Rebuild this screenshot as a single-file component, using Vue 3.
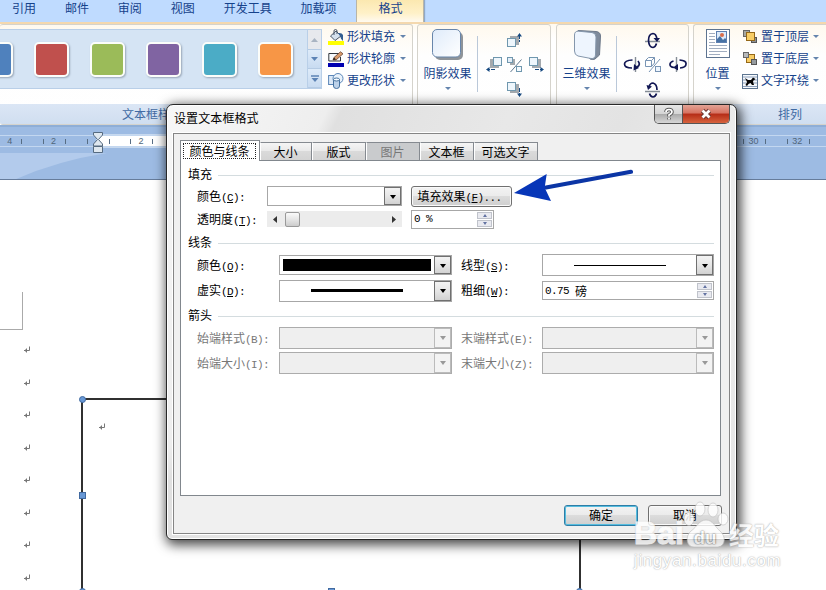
<script setup>
const menus = ['引用', '邮件', '审阅', '视图', '开发工具', '加载项']
const swatches = ['#4f81bd', '#c0504d', '#9bbb59', '#8064a2', '#4bacc6', '#f79646']
const tabs = [
  { text: '颜色与线条', w: 80, state: 'active' },
  { text: '大小', w: 52 },
  { text: '版式', w: 54 },
  { text: '图片', w: 54, state: 'disabled' },
  { text: '文本框', w: 54 },
  { text: '可选文字', w: 64 }
]
const nudges = [
  { x: 23, y: 8, sx: 3, sy: -2 },
  { x: 9, y: 27, sx: -3, sy: 2 },
  { x: 45, y: 27, sx: 3, sy: 2 },
  { x: 23, y: 52, sx: 3, sy: 2 }
]
const rulerMarks = Array.from({ length: 19 }, (_, i) => (i === 2 ? '' : Math.abs(i - 2) * 2))
const arrowRows = [
  { left: '始端样式', lk: 'B', right: '末端样式', rk: 'E' },
  { left: '始端大小', lk: 'I', right: '末端大小', rk: 'Z' }
]
</script>

<template>
  <div class="word">
    <nav class="menu">
      <span v-for="m in menus" :key="m" class="menu-item">{{ m }}</span>
      <span class="menu-item current">格式</span>
    </nav>

    <div class="ribbon">
      <section class="group g-style">
        <div class="group-body">
          <div class="gallery">
            <div class="swatches">
              <i v-for="c in swatches" :key="c" class="swatch" :style="{ background: c }"></i>
            </div>
            <div class="gallery-scroll">
              <span class="off"><svg width="7" height="4"><path d="M0 4L3.5 0L7 4z" fill="#a9b4c2" /></svg></span>
              <span><svg width="7" height="4"><path d="M0 0L3.5 4L7 0z" fill="#5c83b5" /></svg></span>
              <span><svg width="8" height="7"><path d="M0 1H8" stroke="#5c83b5" stroke-width="1.4" /><path d="M.5 3L4 7L7.500 3z" fill="#5c83b5" /></svg></span>
            </div>
          </div>
          <div class="commands">
            <div class="command">
              <svg width="16" height="16" viewBox="0 0 16 16">
                <rect y="12" width="16" height="4" fill="#ffff00" />
                <path d="M2.500 7L8 2L13 7L7 11.500z" fill="#d6e2ee" stroke="#4a5666" />
                <path d="M6 6V2Q6 .5 7.500 .5T9 2V5" fill="none" stroke="#4a5666" />
                <path d="M10 4Q14 3.500 15 6V12Q13 11 12 7z" fill="#355f91" />
              </svg>
              <span>形状填充</span><i class="caret"></i>
            </div>
            <div class="command">
              <svg width="16" height="16" viewBox="0 0 16 16">
                <rect y="12" width="16" height="4" fill="#0000b0" />
                <path d="M11 2.500H.8V10H12.500V6" fill="#f7fafd" stroke="#34393f" />
                <path d="M5 9L6 6.500L12.500 .8L15 2.800L8 9z" fill="#d99b6b" stroke="#694431" stroke-width=".8" />
                <path d="M5 9L6 6.500L8 8.500z" fill="#222" />
              </svg>
              <span>形状轮廓</span><i class="caret"></i>
            </div>
            <div class="command">
              <svg width="16" height="16" viewBox="0 0 16 16">
                <rect x=".6" y="2.500" width="9" height="9" fill="#dce9f7" stroke="#5b86b8" />
                <circle cx="10" cy="5.500" r="5" fill="#e9f2fb" stroke="#5b86b8" />
                <path d="M5.500 6.500V13Q5.500 15.500 8.500 15.500T11.500 13V6.500z" fill="#bcd2ea" stroke="#44719f" />
                <ellipse cx="8.500" cy="6.500" rx="3" ry="1.500" fill="#f4f9fe" stroke="#44719f" />
              </svg>
              <span>更改形状</span><i class="caret"></i>
            </div>
          </div>
        </div>
        <div class="group-title first">文本框样式</div>
      </section>

      <section class="group g-effect">
        <div class="group-body">
          <div class="big">
            <svg width="34" height="34" viewBox="0 0 34 34">
              <defs><linearGradient id="tile" x2="1" y2="1"><stop stop-color="#dfebfa" /><stop offset="1" stop-color="#fff" /></linearGradient></defs>
              <rect x="4" y="4" width="28" height="28" rx="5" fill="#8f9499" />
              <rect x="1.500" y="1.500" width="28" height="27.500" rx="4.500" fill="url(#tile)" stroke="#6886ab" />
            </svg>
            <span>阴影效果</span><i class="caret"></i>
          </div>
          <svg class="pad" width="64" height="68" viewBox="0 0 64 68" fill="none">
            <g v-for="n in nudges" :key="n.x + '-' + n.y">
              <rect :x="n.x + n.sx" :y="n.y + n.sy" width="9" height="9" fill="#a4a9ae" />
              <rect :x="n.x + .5" :y="n.y + .5" width="8" height="8" fill="#eef6fc" stroke="#6f97ae" />
            </g>
            <rect x="26" y="29" width="5" height="6" fill="#a4a9ae" />
            <rect x="23.500" y="27.500" width="5" height="5" fill="#e4eef8" stroke="#6f97ae" />
            <rect x="32.500" y="36.500" width="5" height="5" fill="#f5faff" stroke="#6f97ae" />
            <path d="M37.500 29.500L26.500 42" stroke="#5f7890" />
            <path d="M35.500 5V12M11 39.500H4M51 39.500H58M35.500 58V65" stroke="#164980" stroke-dasharray="4 1" />
            <path d="M33 6.500L35.500 3L38 6.500zM5.500 37L2 39.500L5.500 42zM56.500 37L60 39.500L56.500 42zM33 63.500L35.500 67L38 63.500z" fill="#164980" />
          </svg>
        </div>
        <div class="group-title"></div>
      </section>

      <section class="group g-effect g-3d">
        <div class="group-body">
          <div class="big">
            <svg width="34" height="34" viewBox="0 0 34 34">
              <path d="M8 2.500L26 3.500Q30.500 4 30.500 8L29.500 27L25 31Q23 32 20 31L12 20z" fill="#7f8b9c" stroke="#6e7a8b" />
              <path d="M4.500 7Q4.500 3 8.500 3.200L22 4.500Q26 5 26 9L25.500 27Q25 31 21 30.500L8 28Q4.500 27 4.500 23z" fill="#eef5fe" stroke="#8597ac" />
            </svg>
            <span>三维效果</span><i class="caret"></i>
          </div>
          <svg class="pad" width="64" height="68" viewBox="0 0 64 68" fill="none">
            <g stroke="#858d96" stroke-width="1.400"><path d="M22 11.500H37M22 61.500H37M12.500 27V42M53.500 27V42" /></g>
            <g stroke="#111653" stroke-width="1.700">
              <path d="M34 9Q33 3.500 30 3.500Q25.500 4 25.500 10.500Q26 17.500 30 17.500Q32.500 17 33.500 13.500" />
              <path d="M26 57Q27 53 30 53Q34 54 34 60M26.500 63.500Q27.500 67 30 67Q32.500 67 33.500 63.500" />
              <path d="M9.500 30Q1.500 30.500 1.500 34Q1.500 38 9 38M15 31Q18 35 14 37" />
              <path d="M56.500 30Q63.500 30.500 63 34Q63 37.500 57 38M50.500 31Q47 32 47 34.500Q47 37 51 37.500" />
            </g>
            <path d="M30.500 8H37L34 12zM23.500 55L29 56.500L25 60zM11 34L16 38L10.500 40.500zM55 34L50 37.500L55 40.500z" fill="#111653" />
            <path d="M22.500 30.500L25.500 27.500H31.500V33L28.500 36.500H22.500zM22.500 30.500H28.500V36.500M28.500 30.500L31.500 27.500M37 29L26 42" stroke="#7894b4" />
            <rect x="32.500" y="36.500" width="5" height="5" fill="#eef6ff" stroke="#7894b4" />
          </svg>
        </div>
        <div class="group-title"></div>
      </section>

      <section class="group g-arrange">
        <div class="group-body">
          <div class="big">
            <svg width="26" height="34" viewBox="0 0 26 34">
              <rect x="1.500" y="1.500" width="23" height="28" fill="#fff" stroke="#5e7490" />
              <path d="M4 5.500H10M4 8.500H10M4 11.500H10M4 14.500H10M4 17.500H22M4 20.500H22M4 23.500H22M4 26.500H15" stroke="#a1adc0" />
              <rect x="11.500" y="3.500" width="10" height="11" fill="#dceafa" stroke="#5d7fb0" />
              <path d="M12 14V11L15 8L18 12L20 10L21 11V14z" fill="#4772a5" /><circle cx="17" cy="7" r="2" fill="#d86d4b" />
            </svg>
            <span>位置</span><i class="caret"></i>
          </div>
          <div class="commands">
            <div class="command">
              <svg width="16" height="16" viewBox="0 0 16 16"><rect x="1.500" y="1.500" width="6" height="6" fill="#a7a7a0" stroke="#666" /><rect x="9.500" y="8.500" width="5" height="5" fill="#8d9297" stroke="#555" /><rect x="4.500" y="3.500" width="8" height="8" fill="#f8cd65" stroke="#946718" /></svg>
              <span>置于顶层</span><i class="caret"></i>
            </div>
            <div class="command">
              <svg width="16" height="16" viewBox="0 0 16 16"><rect x="4.500" y="3.500" width="8" height="8" fill="#f8cd65" stroke="#946718" /><rect x="1.500" y="1.500" width="5" height="5" fill="#b7b9b9" stroke="#666" /><rect x="9.500" y="8.500" width="5" height="5" fill="#959b9f" stroke="#555" /></svg>
              <span>置于底层</span><i class="caret"></i>
            </div>
            <div class="command">
              <svg width="16" height="16" viewBox="0 0 16 16"><rect x=".5" y="1.500" width="15" height="14" fill="#f6f9fd" stroke="#5c7490" /><path d="M1 4H15M1 13.500H15M1 7H4M12 7H15M1 10H4M12 10H15" stroke="#8da0bb" /><path d="M3 5L6 7H9L11 4.500L13.500 6L11 8L12 12H10L8.500 10L6.500 11L5 13L3.500 12L5 9z" fill="#050505" /></svg>
              <span>文字环绕</span><i class="caret"></i>
            </div>
          </div>
        </div>
        <div class="group-title arrange-title">排列</div>
      </section>
    </div>

    <div class="ruler-zone">
      <svg class="swoosh" width="826" height="53"><path d="M0 26H107Q56 34 14 53H0z" fill="#b3cbec" /></svg>
      <div class="ruler">
        <div class="ruler-page"></div>
        <div class="marks">
          <span v-for="(n, i) in rulerMarks" :key="i" class="mark">{{ n }}</span>
        </div>
        <svg class="indent" width="10" height="22" viewBox="0 0 10 22"><path d="M.5 .5H9.500V3L5.500 7.500L9.500 12V14H.5V12L4.500 7.500L.5 3zM.5 14.500H9.500V20.500H.5z" fill="#dfe8f0" stroke="#566b80" /></svg>
      </div>
    </div>

    <main class="page">
      <div class="margin-corner"></div>
      <div class="paragraphs">
        <svg v-for="n in 8" :key="n" width="8" height="8" viewBox="0 0 8 8"><path d="M6.500 .5V4.500H1M3.500 2.500V6.500M2.500 3.500V5.500" fill="none" stroke="#777" /></svg>
      </div>
      <div class="textbox">
        <i class="handle round tl"></i><i class="handle ml"></i><i class="handle round bl"></i><i class="handle bm"></i><i class="handle round br"></i>
        <svg class="pilcrow" width="8" height="8" viewBox="0 0 8 8"><path d="M6.500 .5V4.500H1M3.500 2.500V6.500M2.500 3.500V5.500" fill="none" stroke="#777" /></svg>
      </div>
    </main>

    <div class="dialog">
      <header class="titlebar">
        <span class="title">设置文本框格式</span>
        <div class="window-buttons">
          <span class="help"><svg width="12" height="14" viewBox="0 0 12 14"><path d="M3 5Q3 2.500 6 2.500T9 5Q9 6.500 6 8V9.500M6 10.800V12.500" fill="none" stroke="#5b5b5b" stroke-width="3.600" /><path d="M3 5Q3 2.500 6 2.500T9 5Q9 6.500 6 8V9.500M6 10.800V12.500" fill="none" stroke="#fff" stroke-width="1.700" /></svg></span>
          <span class="close"><svg width="14" height="12" viewBox="0 0 14 12"><path d="M3.500 2.500L10.500 9.500M10.500 2.500L3.500 9.500" stroke="#6b3631" stroke-width="4.600" /><path d="M3.500 2.500L10.500 9.500M10.500 2.500L3.500 9.500" stroke="#fff" stroke-width="2.800" /></svg></span>
        </div>
      </header>

      <div class="client">
        <div class="tabs">
          <div v-for="t in tabs" :key="t.text" class="tab" :class="t.state" :style="{ width: t.w + 'px' }"><span>{{ t.text }}</span></div>
        </div>
        <div class="panel">
          <div class="heading"><span>填充</span></div>
          <div class="row fill-row">
            <label>颜色<b>(<u>C</u>):</b></label>
            <div class="combo h19"><div class="value"></div><i class="drop"></i></div>
            <button class="btn effects">填充效果<b>(<u>F</u>)...</b></button>
          </div>
          <div class="row fill-row trans">
            <label>透明度<b>(<u>T</u>):</b></label>
            <div class="slider"><svg width="4" height="7"><path d="M4 0L0 3.500L4 7z" /></svg><i></i><svg width="4" height="7"><path d="M0 0L4 3.500L0 7z" /></svg></div>
            <div class="spin short"><b>0 %</b><span class="arrows"><i class="up"></i><i class="down"></i></span></div>
          </div>

          <div class="heading second"><span>线条</span></div>
          <div class="row pair">
            <label>颜色<b>(<u>O</u>):</b></label>
            <div class="combo h19"><div class="value black"></div><i class="drop"></i></div>
            <label>线型<b>(<u>S</u>):</b></label>
            <div class="combo"><div class="value"><i class="thin"></i></div><i class="drop"></i></div>
          </div>
          <div class="row pair">
            <label>虚实<b>(<u>D</u>):</b></label>
            <div class="combo"><div class="value"><i class="thick"></i></div><i class="drop"></i></div>
            <label>粗细<b>(<u>W</u>):</b></label>
            <div class="spin"><b>0.75 </b>磅<span class="arrows"><i class="up"></i><i class="down"></i></span></div>
          </div>

          <div class="heading third"><span>箭头</span></div>
          <div v-for="r in arrowRows" :key="r.left" class="row pair disabled">
            <label>{{ r.left }}<b>({{ r.lk }}):</b></label>
            <div class="combo"><div class="value"></div><i class="drop"></i></div>
            <label>{{ r.right }}<b>({{ r.rk }}):</b></label>
            <div class="combo"><div class="value"></div><i class="drop"></i></div>
          </div>
        </div>
        <footer class="actions">
          <button class="btn primary">确定</button>
          <button class="btn">取消</button>
        </footer>
      </div>
    </div>

    <svg class="pointer" width="122" height="34" viewBox="0 0 122 34">
      <path d="M119 3.800L34 19.500" stroke="#0b35a5" stroke-width="4.200" stroke-linecap="round" />
      <path d="M2 25L34.700 6L33 17.500L33.300 21L39 33z" fill="#0736b8" />
    </svg>

    <div class="watermark">
      <div class="brand">
        <span class="bai">Bai</span>
        <span class="paw">
          <svg width="48" height="48" viewBox="0 0 48 48"><g fill="#fff" stroke="#bbb" stroke-width=".7"><ellipse cx="8" cy="19" rx="5" ry="6.500" /><ellipse cx="19" cy="9" rx="5" ry="7" /><ellipse cx="32" cy="10" rx="5" ry="7" /><ellipse cx="42" cy="19" rx="5" ry="6" /><path d="M25 20C18 20 16 27 10 31C4 36 5 47 13 47H37C45 46 45 36 39 31C34 27 32 20 25 20z" /></g></svg>
          <em>du</em>
        </span>
        <span class="jy">经验</span>
      </div>
      <div class="url">jingyan.baidu.com</div>
    </div>
  </div>
</template>

<style>
body { margin: 0; overflow: hidden; }
</style>

<style scoped>
* { box-sizing: border-box; }
.word { position: relative; width: 826px; height: 590px; overflow: hidden; background: #fff; font: 12px/16px "Noto Sans CJK SC", sans-serif; color: #000; display: flex; flex-direction: column; }
svg { display: block; flex: none; }
i { display: block; font-style: normal; }
b { font: 11px/14px "Liberation Mono", monospace; letter-spacing: -.6px; }

.menu { flex: none; height: 22px; background: #bfdbff; display: flex; align-items: flex-start; gap: 28.900px; padding-left: 12px; color: #15428b; white-space: nowrap; }
.menu-item { line-height: 16px; }
.current { width: 68px; height: 22px; margin-left: -9px; text-align: center; background: linear-gradient(#fbe8b0, #fff1c8 60%, #fffaf0); border: 1px solid #b9b5a6; border-width: 0 1px; box-shadow: 1px 0 1px #90a9c8; }

.ribbon { flex: none; height: 105px; border-top: 2px solid #f4d8ae; background: linear-gradient(#fffaf0, #fff 15px); border-bottom: 2px solid #8faed6; display: flex; gap: 4px; color: #15428b; }
.group { flex: none; height: 101px; border: 1px solid #d5d3cc; border-radius: 3px; display: flex; flex-direction: column; justify-content: space-between; background: linear-gradient(#fff9ee, #fefefe 30px, #fff); overflow: hidden; }
.g-style { width: 413px; border-left: 0; }
.g-effect { width: 134px; }
.g-3d { margin-left: 1px; width: 133px; }
.g-arrange { width: 140px; border-right: 0; }
.group-body { height: 76px; display: flex; }
.group-title { height: 20px; line-height: 19px; background: linear-gradient(#dbe6f5, #d0def0); color: #416aa3; }
.first { padding-left: 122px; }
.arrange-title { padding-left: 84px; }
.gallery { width: 322px; height: 60px; margin-top: 4px; border: 1px solid #b9cfe8; border-left: 0; background: #d5e4f4; display: flex; justify-content: space-between; overflow: hidden; }
.swatches { display: flex; gap: 21px; align-items: center; margin-left: -22px; }
.swatch { flex: none; width: 35px; height: 35px; border: 2px solid #fbfdfa; border-radius: 5px; box-shadow: 1px 1px 2px #98a6b7; }
.gallery-scroll { flex: none; width: 14px; display: grid; grid-template-rows: 20px 19px 19px; border-left: 1px solid #b9cfe8; }
.gallery-scroll span { display: grid; place-items: center; border-bottom: 1px solid #b5cbe4; background: linear-gradient(#deebf9, #c8dbf1); }
.gallery-scroll .off { background: #e7e9ed; }
.commands { display: flex; flex-direction: column; padding: 1px 0 0 6px; }
.command { height: 22px; display: flex; align-items: center; gap: 3px; white-space: nowrap; }
.command span { line-height: 14px; margin-top: -2px; }
.caret { border: 3px solid transparent; border-top: 3px solid #6484ad; border-bottom: 0; width: 6px; height: 3px; }
.command .caret { margin-left: 2px; margin-top: -1px; }
.big { width: 59px; display: flex; flex-direction: column; align-items: center; padding-top: 3px; white-space: nowrap; }
.big span { margin-top: 2px; height: 23px; line-height: 17px; }
.g-effect .group-body::after { content: ""; order: 1; width: 1px; height: 56px; margin-top: 11px; background: #bac8d9; }
.g-effect .pad { order: 2; margin: 5px 0 0 6px; }
.g-arrange .big { width: 47px; }
.g-arrange .commands { padding-left: 1px; }
.g-arrange .command { gap: 3px; }
.g-arrange .command .caret { margin-left: 1px; }

.ruler-zone { flex: none; height: 53px; display: grid; background: #9dbbe3; border-bottom: 1px solid #667c9b; overflow: hidden; }
.swoosh { grid-area: 1 / 1; }
.ruler { grid-area: 1 / 1; height: 22px; margin-top: 5px; display: grid; align-items: start; }
.ruler > * { grid-area: 1 / 1; }
.ruler-page { height: 12px; margin: 3px 96px 0 97px; background: #fff; outline: 1px solid #c7d9ef; }
.marks { display: flex; margin: 3px 0 0 -12px; height: 12px; width: 838px; overflow: hidden; border-top: 1px solid #c3d7f0; border-bottom: 1px solid #c3d7f0; }
.mark { flex: none; width: 43.750px; text-align: center; font: 9px/11px "Liberation Sans", sans-serif; color: #506579; background: linear-gradient(#576d84, #576d84) 11px 3px / 1px 5px no-repeat, linear-gradient(#576d84, #576d84) 33px 3px / 1px 5px no-repeat; }
.indent { margin: 0 0 0 92.500px; }

.page { position: relative; flex: 1; background: #fff; }
.margin-corner { width: 23px; height: 38px; margin-top: 112px; border: 1px solid #aaa; border-width: 0 1px 1px 0; }
.paragraphs { width: 8px; margin: 16px 0 0 23px; display: flex; flex-direction: column; gap: 24.500px; }
.textbox { position: absolute; left: 81px; top: 218px; width: 500px; height: 194px; border: 2px solid #303030; border-bottom: 0; }
.handle { position: absolute; width: 7px; height: 7px; background: #6898d5; border: 1px solid #416aa0; }
.round { border-radius: 50%; }
.tl { left: -4px; top: -4px; } .ml { left: -4px; top: 92px; } .bl { left: -4px; top: 188px; } .bm { left: 245px; top: 188px; } .br { right: -4px; top: 188px; }
.pilcrow { margin: 23px 0 0 15px; }

.dialog { position: absolute; left: 166px; top: 104px; width: 571px; height: 436px; padding: 0 6px 6px; border: 1px solid #282828; border-radius: 7px 7px 6px 6px; background: #e4e4e4; box-shadow: inset 0 0 0 1px #fff, 2px 3px 12px 2px rgba(0, 0, 0, .72); background-image: linear-gradient(115deg, #f7f7f7 0, #eee 21%, #e0e0e0 23%, #e8e8e8 45%, #e3e3e3 60%, #eee 80%, #e3e3e3); }
.titlebar { height: 28px; display: flex; justify-content: space-between; padding-left: 1px; }
.title { line-height: 16px; margin-top: 5px; letter-spacing: .1px; }
.window-buttons { display: flex; width: 76px; height: 19px; border: 1px solid #555; border-top: 0; border-radius: 0 0 5px 5px; overflow: hidden; }
.window-buttons span { display: grid; place-items: center; }
.help { width: 28px; background: linear-gradient(#e6e6e6, #d4d4d4 50%, #aaa 51%, #d7d7d7); border-right: 1px solid #555; }
.close { flex: 1; background: linear-gradient(#e3a395, #d67261 45%, #b52c16 50%, #d7633e); }
.client { height: 401px; border: 1px solid #858585; outline: 1px solid #fff; background: #f0f0f0; padding: 6px 9px 0 6px; }
.tabs { display: flex; align-items: flex-end; height: 20px; }
.tab { flex: none; height: 18px; border: 1px solid #858a90; border-left-color: #fff; border-bottom: 0; background: linear-gradient(#f5f5f5, #e9e9e9 48%, #dadada 50%, #d3d3d3); text-align: center; line-height: 18px; padding-right: 1px; white-space: nowrap; }
.tab.active { height: 21px; align-self: flex-start; background: #fff; border-left-color: #858a90; padding: 2px 2px; z-index: 1; position: relative; line-height: 14px; }
.active span { display: block; width: 73px; height: 16px; border: 1px dotted #222; }
.tab.disabled { background: #c9cbcd; color: #777; }
.panel { width: 541px; height: 336px; border: 1px solid #81878d; background: #fff; padding: 5px 6px 0 7px; }
.heading { height: 18px; display: flex; align-items: center; gap: 6px; }
.heading::after { content: ""; flex: 1; height: 1px; background: #d4dcdf; }
.heading span { line-height: 14px; margin-top: -2px; }
.heading.second { margin-top: 4px; }
.heading.third { margin-top: 4px; }
.row { display: flex; align-items: center; }
.row label { white-space: nowrap; padding-left: 9px; }
.fill-row { height: 24px; }
.fill-row label { width: 79px; }
.trans { height: 22px; }
.pair { height: 25px; display: grid; grid-template-columns: 91px 173px 90px 172px; }
.pair label + div { width: 100%; }
.second + .pair { height: 26px; }
.disabled label { padding-top: 1px; }
u { text-decoration-thickness: 1px; text-underline-offset: 1px; }
.combo { width: 135px; height: 22px; border: 1px solid #a7a7a7; background: #fff; display: flex; }
.h19 { height: 20px; }
.value { flex: 1; display: grid; place-items: center; }
.black { background: #000; margin: 3px; }
.thin { width: 92px; height: 1px; background: #000; }
.thick { width: 92px; height: 3px; background: #000; }
.drop { width: 17px; border: 1px solid #707070; background: linear-gradient(#f3f3f3, #e6e6e6 50%, #d2d2d2); display: grid; place-items: center; }
.drop::after { content: ""; border: 3.500px solid transparent; border-top: 4px solid #000; border-bottom: 0; margin-top: 1px; }
.btn { width: 74px; height: 21px; padding: 0 0 1px; border: 1px solid #707070; border-radius: 3px; box-shadow: inset 0 0 0 1px #fafafa; background: linear-gradient(#f3f3f3, #ebebeb 49%, #dcdcdc 50%, #cfcfcf); font: 12px/18px "Noto Sans CJK SC", sans-serif; color: #000; }
.effects { width: 101px; margin-left: 9px; white-space: nowrap; padding-right: 4px; }
.slider { width: 135px; height: 16px; background: #ececec; display: flex; align-items: center; padding: 0 6px; }
.slider svg { fill: #333; }
.slider i { width: 15px; height: 15px; margin: 0 auto 0 8px; border: 1px solid #999; border-radius: 2px; background: linear-gradient(#fafafa, #e5e5e5 50%, #ccc); }
.spin { height: 19px; border: 1px solid #a7a7a7; background: #fff; display: flex; align-items: center; padding-left: 2px; white-space: pre; line-height: 14px; }
.short { width: 83px; margin-left: 9px; }
.arrows { margin-left: auto; width: 15px; height: 15px; margin-right: 1px; display: grid; grid-template-rows: 1fr 1fr; gap: 1px; }
.arrows i { border: 1px solid #c0c3cb; background: #e9eaf0; display: grid; place-items: center; }
.arrows i::after { content: ""; border: 2.500px solid transparent; }
.arrows .up::after { border-bottom: 3px solid #6373a2; border-top: 0; }
.arrows .down::after { border-top: 3px solid #6373a2; border-bottom: 0; }
.disabled { color: #777; }
.disabled .combo { background: #efefef; border-color: #acacac; }
.disabled .drop { border-color: #bbb; background: #f3f3f3; }
.disabled .drop::after { border-top-color: #999; }
.actions { display: flex; justify-content: flex-end; gap: 10px; padding-top: 9px; margin-right: -2px; }
.actions .btn.primary { border-color: #2f7da6; box-shadow: inset 0 0 0 1px #55bddf; }

.pointer { position: absolute; left: 512px; top: 168px; }
.watermark { position: absolute; left: 634px; top: 500px; width: 160px; height: 74px; color: #fff; opacity: .8; text-shadow: 0 0 1px #999, 0 0 2px #bbb; }
.brand { height: 49px; display: flex; align-items: flex-end; }
.bai { font: bold 32px/32px "Liberation Sans", sans-serif; width: 47px; -webkit-text-stroke: 1px #fff; }
.paw { width: 48px; height: 49px; display: grid; }
.paw > * { grid-area: 1 / 1; }
.paw em { align-self: end; text-align: center; font: bold 19px/23px "Liberation Sans", sans-serif; color: #fff; text-shadow: 0 0 2px #666, 0 0 1px #777; z-index: 1; }
.jy { font: bold 25px/30px "Noto Sans CJK SC", sans-serif; }
.url { font: 17px/23px "Liberation Sans", sans-serif; letter-spacing: .6px; }
</style>
